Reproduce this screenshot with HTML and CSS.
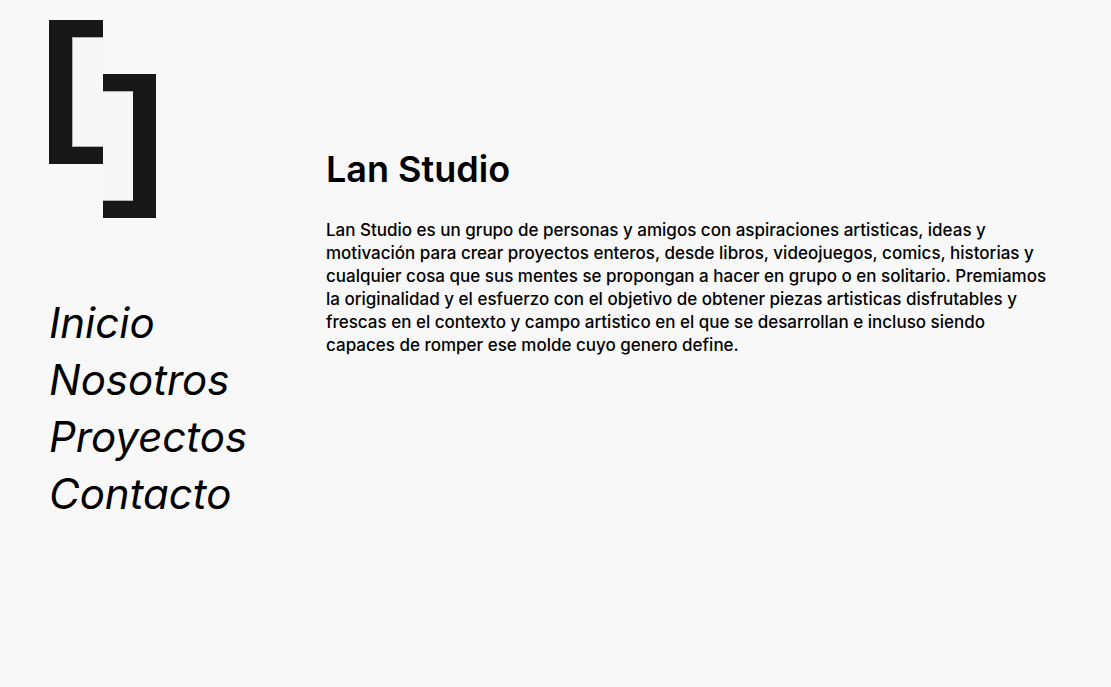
FILE: index.html
```html
<!DOCTYPE html>
<html lang="es">
<head>
<meta charset="utf-8">
<meta name="viewport" content="width=device-width, initial-scale=1">
<title>Lan Studio</title>
<link rel="stylesheet" href="styles.css">
</head>
<body>
<div class="page">
  <header class="sidebar">
    <a class="logo" href="#" aria-label="Lan Studio">
      <svg width="107" height="198" viewBox="0 0 107 198" aria-hidden="true">
        <path fill="#b0b0b0" d="M23 17H54V127H23ZM54 71H84V181H54Z"/>
        <path fill="#f7f7f7" d="M24 18H54V126H24ZM54 72H84V180H54Z"/>
        <path fill="#171717" d="M0 0H54V17H23V127H54V144H0Z"/>
        <path fill="#171717" d="M54 54H107V198H54V181H84V71H54Z"/>
      </svg>
    </a>
    <nav class="menu">
      <a href="#">Inicio</a>
      <a href="#">Nosotros</a>
      <a href="#">Proyectos</a>
      <a href="#">Contacto</a>
    </nav>
  </header>
  <main class="content">
    <h1 class="title">Lan Studio</h1>
    <p class="intro">Lan Studio es un grupo de personas y amigos con aspiraciones artisticas, ideas y motivación para crear proyectos enteros, desde libros, videojuegos, comics, historias y cualquier cosa que sus mentes se propongan a hacer en grupo o en solitario. Premiamos la originalidad y el esfuerzo con el objetivo de obtener piezas artisticas disfrutables y frescas en el contexto y campo artistico en el que se desarrollan e incluso siendo capaces de romper ese molde cuyo genero define.</p>
  </main>
</div>
</body>
</html>
```
FILE: styles.css
```css
body {
  margin: 0;
  background: #f8f8f8;
  color: #000;
  font-family: Inter, "Liberation Sans", sans-serif;
}

.page {
  display: flex;
  padding: 20px 60px 20px 49px;
}

.sidebar {
  flex: 0 0 277px;
}

.logo,
.logo svg {
  display: block;
}

.menu {
  display: flex;
  flex-direction: column;
  align-items: flex-start;
  margin-top: 76px;
}

.menu a {
  color: inherit;
  font-size: 42px;
  font-style: italic;
  font-weight: 400;
  line-height: 57px;
  text-decoration: none;
}

.content {
  flex: 1;
  padding-top: 125px;
}

.title {
  margin: 0 0 25px;
  font-size: 36px;
  font-weight: 600;
  line-height: 49px;
}

.intro {
  margin: 0;
  font-size: 17px;
  font-weight: 500;
  line-height: 23px;
}
```
